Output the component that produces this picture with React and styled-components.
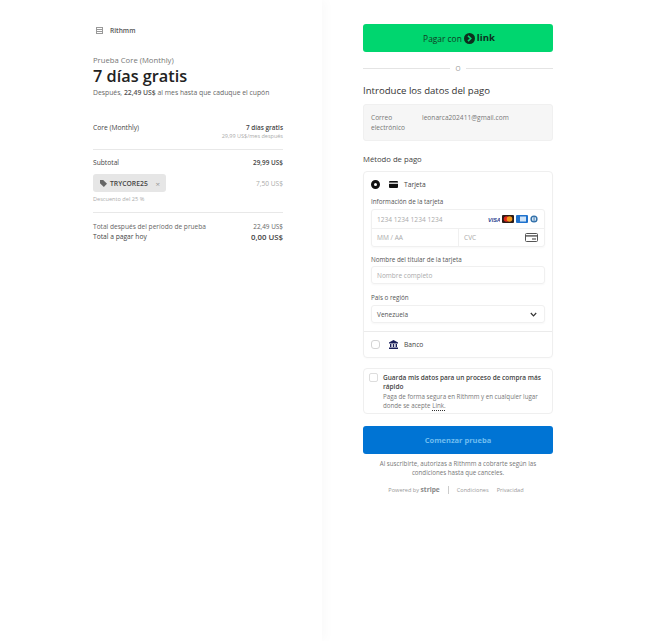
import React from 'react';
import styled, { createGlobalStyle } from 'styled-components';

const Global = createGlobalStyle`
  html, body { margin: 0; padding: 0; background: #fff; }
  body { font-family: "Open Sans", "Noto Sans", sans-serif; color: #1a1a1a; }
  * { box-sizing: border-box; }
`;
const Page = styled.div`display: grid; grid-template-columns: 322px 323px; width: 645px; height: 641px; overflow: hidden;`;
const Summary = styled.section`height: 641px; padding: 25px 39px 0 93px; box-shadow: 4px 0 10px rgba(0,0,0,.025);`;
const Brand = styled.div`display: flex; align-items: center; gap: 7px; height: 11px; font-size: 6.6px; font-weight: 600; color: #555; svg { margin-left: 3px; }`;
const Eyebrow = styled.div`margin-top: 18px; font-size: 7.7px; font-weight: 500; line-height: 12px; color: #777;`;
const Headline = styled.h1`margin: 0; font-size: 16.3px; line-height: 21px; font-weight: 600; color: #222;`;
const Note = styled.div`margin-top: 1px; font-size: 6.8px; line-height: 10px; color: #666; b { font-weight: 600; color: #555; }`;
const Row = styled.div`display: flex; justify-content: space-between; align-items: flex-start; font-size: ${p => p.$size || 6.7}px; line-height: 10px; font-weight: ${p => p.$w || 500}; color: ${p => p.$c || '#444'}; margin-top: ${p => p.$mt || 0}px;`;
const Right = styled.div`text-align: right; font-size: ${p => p.$s || 6.4}px; font-weight: ${p => p.$w || 600};`;
const Sub = styled.div`font-size: 5.5px; line-height: 6px; font-weight: 400; color: #aaa;`;
const Rule = styled.hr`border: 0; border-top: 1px solid #e8e8e8; margin: ${p => p.$m || '0'};`;
const Coupon = styled.div`display: inline-flex; align-items: center; gap: 3px; height: 18px; width: 73px; padding-left: 7px; background: #e6e6e6; border-radius: 3px; font-size: 6.8px; font-weight: 600; color: #444;`;
const Close = styled.span`margin-left: auto; margin-right: 6px; font-size: 8px; font-weight: 400; color: #999;`;
const Faint = styled.div`font-size: 5.6px; line-height: 8px; margin-top: 3px; color: #aaa;`;
const CouponRow = styled.div`display: flex; justify-content: space-between; align-items: center; margin-top: 6px; font-size: 6.6px; color: #aaa;`;

const Checkout = styled.section`padding: 24px 92px 0 41px;`;
const LinkBtn = styled.div`height: 28px; border-radius: 3px; background: #00d66f; display: flex; align-items: center; justify-content: center; gap: 2px; font-size: 8.4px; color: #123a25; font-weight: 500; padding-left: 2px;`;
const LinkWord = styled.span`font-size: 9.6px; line-height: 12px; font-weight: 700; color: #0d2f1e;`;
const Or = styled.div`display: flex; align-items: center; gap: 5px; margin-top: 12px; height: 9px; font-size: 6.5px; color: #999; &::before, &::after { content: ''; flex: 1; border-top: 1px solid #e4e4e4; }`;
const Title = styled.h2`margin: 11px 0 0; font-size: 9.6px; line-height: 14px; font-weight: 500; color: #333;`;
const EmailBox = styled.div`display: grid; grid-template-columns: 51px 1fr; margin-top: 6px; height: 37px; padding: 8px 7px; background: #f6f6f6; border: 1px solid #f0f0f0; border-radius: 3px; font-size: 6.6px; line-height: 10px; color: #777;`;
const Label = styled.div`font-size: ${p => p.$s || 6.3}px; line-height: 10px; font-weight: ${p => p.$w || 500}; color: ${p => p.$c || '#555'}; margin-top: ${p => p.$mt || 0}px;`;
const Methods = styled.div`margin-top: 7px; border: 1px solid #efefef; border-radius: 4px; box-shadow: 0 1px 2px rgba(0,0,0,.02);`;
const CardBlock = styled.div`padding: 0 7px 8px; border-bottom: 1px solid #ebebeb;`;
const MethodRow = styled.div`display: flex; align-items: center; height: 25px; font-size: 6.7px; font-weight: 500; color: #444; padding-left: ${p => p.$pl || 0}px;`;
const Radio = styled.span`width: 9px; height: 9px; border-radius: 50%; margin-right: 9px; ${p => p.$on ? 'border: 3px solid #111; background: #fff;' : 'border: 1px solid #d4d4d4; border-radius: 3px; background: #fff;'}`;
const MethodIcon = styled.svg`margin-right: 6px;`;
const FieldGroup = styled.div`margin-top: 2px; border: 1px solid #f0f0f0; border-radius: 3px; box-shadow: 0 1px 2px rgba(0,0,0,.03);`;
const FieldRow = styled.div`display: grid; grid-template-columns: ${p => p.$split ? '1fr 1fr' : '1fr'}; height: 18px; border-top: ${p => p.$line ? '1px solid #f0f0f0' : '0'};`;
const Cell = styled.div`display: flex; align-items: center; justify-content: space-between; padding: 0 6px 0 5px; font-size: 6.6px; color: #aaa; border-left: ${p => p.$line ? '1px solid #f0f0f0' : '0'};`;
const CardLogos = styled.span`display: flex; align-items: center; gap: 2px;`;
const Input = styled.div`display: flex; align-items: center; justify-content: space-between; height: 18px; margin-top: ${p => p.$mt || 1}px; padding: 0 7px 0 5px; border: 1px solid #f0f0f0; border-radius: 3px; font-size: 6.5px; color: ${p => p.$dark ? '#555' : '#aaa'}; box-shadow: 0 1px 2px rgba(0,0,0,.03);`;
const SaveBox = styled.div`display: flex; gap: 5px; margin-top: 10px; height: 46px; padding: 4px 5px 0 5px; border: 1px solid #efefef; border-radius: 4px;`;
const Check = styled.span`flex: none; width: 9px; height: 9px; border: 1px solid #ddd; border-radius: 2px;`;
const SaveCopy = styled.div`margin-top: 1px;`;
const SaveTitle = styled.div`font-size: 6.5px; line-height: 8.5px; font-weight: 600; color: #444;`;
const SaveText = styled.div`margin-top: 1px; font-size: 6.2px; line-height: 9px; color: #777; u { text-decoration: underline dotted #333; text-underline-offset: 2px; }`;
const Submit = styled.div`height: 28px; margin-top: 12px; border-radius: 3px; background: #0074d4; display: flex; align-items: center; justify-content: center; font-size: 7.5px; font-weight: 700; color: #6fbdf0;`;
const Terms = styled.p`margin: 5px 10px 0; text-align: center; font-size: 6.2px; line-height: 9px; color: #777;`;
const Foot = styled.div`display: flex; align-items: center; justify-content: center; gap: 8px; margin-top: 8px; font-size: 5.6px; color: #999; padding-right: 4px;`;
const Powered = styled.span`b { font-weight: 700; color: #888; font-size: 6.6px; }`;
const Sep = styled.span`width: 1px; height: 8px; background: #ccc;`;

const CardIcon = () => (
  <MethodIcon width="9" height="7" viewBox="0 0 9 7"><rect width="9" height="7" rx="1" fill="#111"/><rect y="1.6" width="9" height="1.2" fill="#fff"/></MethodIcon>
);
const BankIcon = () => (
  <MethodIcon width="9" height="9" viewBox="0 0 9 9"><path d="M4.5 0 9 2.4V3.4H0V2.4Z" fill="#1a1f5a"/><path d="M1 4h1.4v3H1zM3.8 4h1.4v3H3.8zM6.6 4H8v3H6.6zM0 7.6h9V9H0z" fill="#1a1f5a"/></MethodIcon>
);
const Logos = () => (
  <CardLogos>
    <svg width="12" height="7" viewBox="0 0 12 7"><text x="0" y="6" fontSize="5.5" fontWeight="800" fontStyle="italic" fill="#2a3f8f" fontFamily="Liberation Sans">VISA</text></svg>
    <svg width="12" height="8" viewBox="0 0 12 8"><rect width="12" height="8" rx="1" fill="#2b1b17"/><circle cx="4.5" cy="4" r="2.8" fill="#e0261c"/><circle cx="7.5" cy="4" r="2.8" fill="#f29a1f"/></svg>
    <svg width="12" height="8" viewBox="0 0 12 8"><rect width="12" height="8" rx="1" fill="#1f72cd"/><rect x="4" y="1.5" width="6" height="5" fill="#cfe3f7"/></svg>
    <svg width="8" height="8" viewBox="0 0 8 8"><circle cx="4" cy="4" r="3.6" fill="#2d6da8"/><circle cx="4" cy="4" r="2.2" fill="#dbe9f5"/><rect x="3.6" y="1.6" width=".9" height="4.8" fill="#2d6da8"/></svg>
  </CardLogos>
);

export default function App() {
  return (
    <Page>
      <Global />
      <Summary>
        <Brand>
          <svg width="7" height="7" viewBox="0 0 7 7"><rect x=".5" y=".5" width="6" height="6" fill="none" stroke="#999"/><path d="M1 2.5h5M1 4.5h5" stroke="#999"/></svg>
          Rithmm
        </Brand>
        <Eyebrow>Prueba Core (Monthly)</Eyebrow>
        <Headline>7 días gratis</Headline>
        <Note>Después, <b>22,49 US$</b> al mes hasta que caduque el cupón</Note>
        <Row $mt={25}>
          <span>Core (Monthly)</span>
          <Right>7 días gratis<Sub>29,99 US$/mes después</Sub></Right>
        </Row>
        <Rule $m="10px 0 0" />
        <Row $mt={8}><span>Subtotal</span><Right>29,99 US$</Right></Row>
        <CouponRow>
          <Coupon>
            <svg width="7" height="7" viewBox="0 0 7 7"><path d="M0 0h3.2L7 3.8 3.8 7 0 3.2Z" fill="#666"/></svg>
            TRYCORE25
            <Close>×</Close>
          </Coupon>
          <span>7,50 US$</span>
        </CouponRow>
        <Faint>Descuento del 25 %</Faint>
        <Rule $m="9px 0 0" />
        <Row $mt={9} $w={400} $c="#666" $size={6.6}><span>Total después del período de prueba</span><Right $w={400}>22,49 US$</Right></Row>
        <Row><span>Total a pagar hoy</span><Right $s={7.8}>0,00 US$</Right></Row>
      </Summary>
      <Checkout>
        <LinkBtn>
          Pagar con
          <svg width="11" height="11" viewBox="0 0 11 11"><circle cx="5.5" cy="5.5" r="5.5" fill="#0d2f1e"/><path d="M4 2.8 6.8 5.5 4 8.2" fill="none" stroke="#00d66f" strokeWidth="1.6"/></svg>
          <LinkWord>link</LinkWord>
        </LinkBtn>
        <Or>O</Or>
        <Title>Introduce los datos del pago</Title>
        <EmailBox>
          <div>Correo<br />electrónico</div>
          <div>leonarca202411@gmail.com</div>
        </EmailBox>
        <Label $s={7.7} $c="#444" $mt={13}>Método de pago</Label>
        <Methods>
          <CardBlock>
            <MethodRow><Radio $on /><CardIcon />Tarjeta</MethodRow>
            <Label>Información de la tarjeta</Label>
            <FieldGroup>
              <FieldRow><Cell>1234 1234 1234 1234<Logos /></Cell></FieldRow>
              <FieldRow $split $line>
                <Cell>MM / AA</Cell>
                <Cell $line>CVC
                  <svg width="13" height="9" viewBox="0 0 13 9"><rect x=".5" y=".5" width="12" height="8" rx="1" fill="none" stroke="#555"/><rect x="1" y="2.2" width="11" height="1.4" fill="#555"/><rect x="7" y="5" width="4" height="2" fill="#999"/></svg>
                </Cell>
              </FieldRow>
            </FieldGroup>
            <Label $mt={8}>Nombre del titular de la tarjeta</Label>
            <Input>Nombre completo</Input>
            <Label $mt={9}>País o región</Label>
            <Input $dark $mt={2}>Venezuela
              <svg width="7" height="5" viewBox="0 0 7 5"><path d="M.8 1 3.5 3.8 6.2 1" fill="none" stroke="#333" strokeWidth="1.2"/></svg>
            </Input>
          </CardBlock>
          <MethodRow $pl={7}><Radio /><BankIcon />Banco</MethodRow>
        </Methods>
        <SaveBox>
          <Check />
          <SaveCopy>
            <SaveTitle>Guarda mis datos para un proceso de compra más rápido</SaveTitle>
            <SaveText>Paga de forma segura en Rithmm y en cualquier lugar donde se acepte <u>Link.</u></SaveText>
          </SaveCopy>
        </SaveBox>
        <Submit>Comenzar prueba</Submit>
        <Terms>Al suscribirte, autorizas a Rithmm a cobrarte según las condiciones hasta que canceles.</Terms>
        <Foot>
          <Powered>Powered by <b>stripe</b></Powered>
          <Sep />
          <span>Condiciones</span>
          <span>Privacidad</span>
        </Foot>
      </Checkout>
    </Page>
  );
}
